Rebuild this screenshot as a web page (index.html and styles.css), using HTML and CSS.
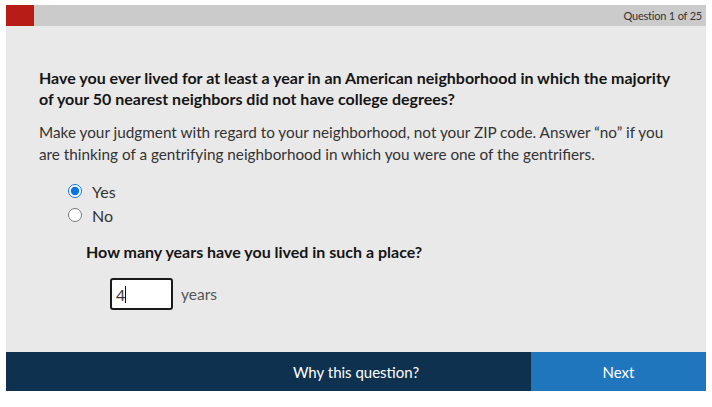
FILE: index.html
```html
<!DOCTYPE html>
<html lang="en">
<head>
<meta charset="utf-8">
<title>Question 1 of 25</title>
<link rel="stylesheet" href="styles.css">
</head>
<body>
<div class="quiz">
  <div class="progress">
    <div class="progress-fill"></div>
    <div class="progress-label">Question 1 of 25</div>
  </div>
  <main class="content">
    <h2 class="question">Have you ever lived for at least a year in an American neighborhood in which the majority of your 50 nearest neighbors did not have college degrees?</h2>
    <p class="hint">Make your judgment with regard to your neighborhood, not your ZIP code. Answer “no” if you are thinking of a gentrifying neighborhood in which you were one of the gentrifiers.</p>
    <div class="choices">
      <label class="choice"><input type="radio" name="q1" checked><span>Yes</span></label>
      <label class="choice"><input type="radio" name="q1"><span>No</span></label>
    </div>
    <div class="followup">
      <h3 class="sub-question">How many years have you lived in such a place?</h3>
      <div class="years-row">
        <span class="input-wrap">
          <input class="years-input" type="text" value="4">
          <span class="caret"></span>
        </span>
        <span class="years-unit">years</span>
      </div>
    </div>
  </main>
  <footer class="actions">
    <button class="why">Why this question?</button>
    <button class="next">Next</button>
  </footer>
</div>
</body>
</html>
```
FILE: styles.css
```css
html, body {
  margin: 0;
  background: #ffffff;
}
body {
  padding: 5px 6px;
  font-family: Lato, "Liberation Sans", sans-serif;
  color: #222;
}
.quiz {
  width: 700px;
  display: flex;
  flex-direction: column;
}
.progress {
  height: 21px;
  background: #cbcbcb;
  display: flex;
  align-items: center;
}
.progress-fill {
  width: 28px;
  height: 100%;
  background: #b71c17;
}
.progress-label {
  margin-left: auto;
  padding-right: 4px;
  font-size: 11px;
  letter-spacing: -0.2px;
  color: #333;
}
.content {
  background: #e9e9e9;
  height: 326px;
  box-sizing: border-box;
  padding: 41px 35px 0 33px;
}
.question {
  margin: 0;
  font-size: 16px;
  line-height: 21px;
  font-weight: 700;
  color: #151515;
}
.hint {
  margin: 12px 0 0;
  font-size: 15.3px;
  line-height: 22px;
  color: #333;
}
.choices {
  margin: 14px 0 0 29px;
  display: flex;
  flex-direction: column;
}
.choice {
  display: flex;
  align-items: center;
  height: 24px;
  font-size: 16px;
  color: #333;
}
.choice input {
  margin: 0 10px 0 0;
  width: 14px;
  height: 14px;
  accent-color: #0a75e0;
}
.followup {
  margin: 14px 0 0 47px;
}
.sub-question {
  margin: 0;
  font-size: 16px;
  line-height: 21px;
  font-weight: 700;
  color: #151515;
}
.years-row {
  margin: 16px 0 0 24px;
  display: flex;
  align-items: center;
  gap: 8px;
}
.input-wrap {
  position: relative;
  display: inline-flex;
}
.years-input {
  width: 63px;
  height: 32px;
  box-sizing: border-box;
  border: 2px solid #1a1a1a;
  border-radius: 3px;
  background: #fff;
  padding: 0 4px;
  font-family: inherit;
  font-size: 16px;
  color: #333;
  outline: none;
}
.caret {
  position: absolute;
  left: 15px;
  top: 8px;
  width: 1px;
  height: 17px;
  background: #111;
}
.years-unit {
  font-size: 15.5px;
  color: #555;
}
.actions {
  position: relative;
  height: 39px;
  background: #0f3150;
  display: flex;
}
.actions button {
  border: 0;
  font-family: inherit;
  font-size: 15px;
  color: #fff;
  cursor: pointer;
}
.why {
  flex: 1;
  background: transparent;
}
.next {
  position: absolute;
  right: 0;
  top: 0;
  bottom: 0;
  width: 175px;
  background: #1f76bc;
}
```
